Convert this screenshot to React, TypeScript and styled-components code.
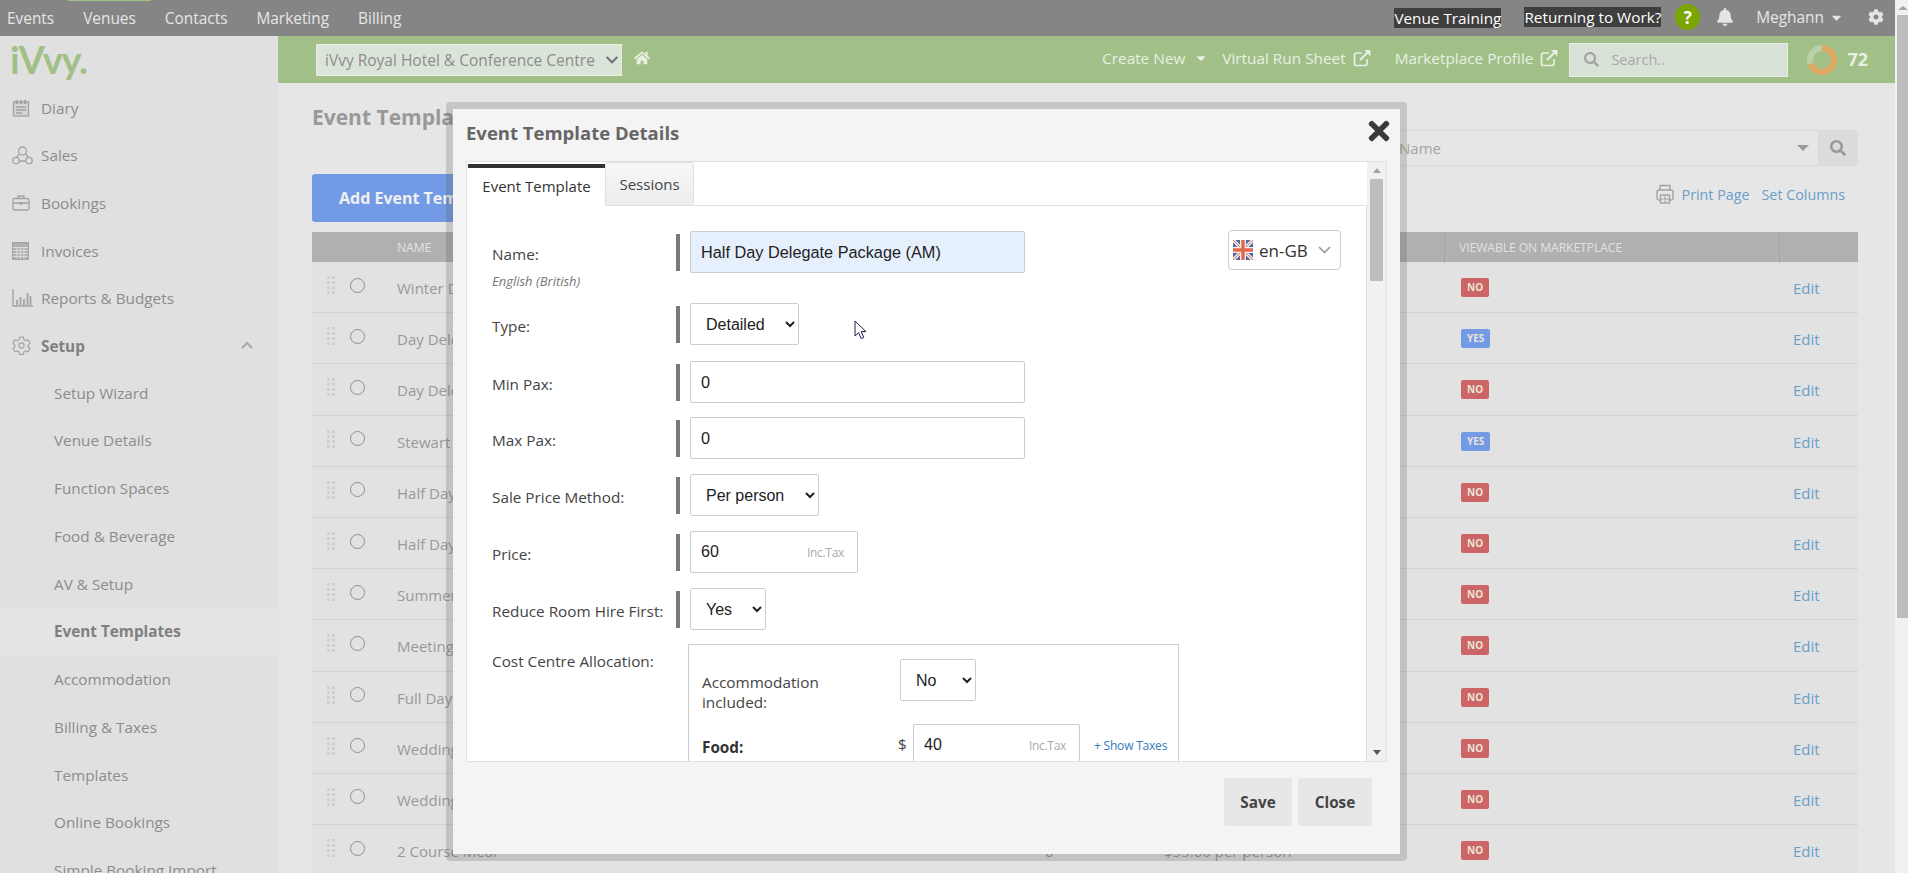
import React from 'react';
import styled, { createGlobalStyle } from 'styled-components';
import { FaTimes, FaHome, FaBell, FaCog, FaSearch, FaCaretDown, FaChevronDown } from 'react-icons/fa';

const UI = `"Open Sans", "Liberation Sans", Arial, sans-serif`;
const NATIVE = `"Liberation Sans", Arial, sans-serif`;

const Global = createGlobalStyle`
  html, body { margin: 0; padding: 0; width: 100%; height: 100%; overflow: hidden; background: #e6e6e6; }
  * { box-sizing: border-box; }
  body { font-family: ${UI}; font-size: 14px; }
`;

const Root = styled.div`
  position: relative;
  width: 1908px;
  height: 873px;
  display: flex;
  overflow: hidden;
`;
const Page = styled.div`
  width: 1895px;
  height: 873px;
  display: flex;
  flex-direction: column;
`;
const PageScroll = styled.div`
  width: 13px;
  height: 873px;
  background: #f1f1f1;
  padding-left: 2px;
  display: flex;
  flex-direction: column;
`;
const PageArrow = styled.div`
  height: 15px;
  display: flex;
  align-items: center;
  justify-content: center;
  &::after {
    content: '';
    border-left: 5px solid transparent;
    border-right: 5px solid transparent;
    border-bottom: 4px solid #a3a3a3;
  }
`;
const PageThumb = styled.div`
  height: 603px;
  background: #bdbdbd;
`;

/* top navigation */
const TopBar = styled.header`
  height: 36px;
  background: #858585;
  display: flex;
  align-items: center;
  justify-content: space-between;
  padding: 0 11px 0 7px;
  flex: none;
`;
const TopNav = styled.nav`
  display: flex;
  gap: 29px;
  height: 36px;
`;
const TopLink = styled.a<{ $active?: boolean }>`
  color: #e6e6e6;
  font-size: 15.4px;
  line-height: 37px;
  height: 36px;
  position: relative;
  &::before {
    content: '';
    display: ${(p) => (p.$active ? 'block' : 'none')};
    position: absolute;
    top: 0;
    left: -15px;
    right: -15px;
    height: 1px;
    background: #a1c088;
  }
`;
const TopRight = styled.div`
  display: flex;
  align-items: center;
`;
const TrainingChip = styled.span<{ $gap: number; $up?: boolean }>`
  background: #3e3e3e;
  color: #fff;
  font-size: 15.3px;
  line-height: 20px;
  height: 20px;
  white-space: nowrap;
  margin-right: ${(p) => p.$gap}px;
  margin-top: ${(p) => (p.$up ? '-2px' : '0')};
`;
const HelpBadge = styled.span`
  width: 25px;
  height: 26px;
  border-radius: 50%;
  background: #7ba600;
  color: #fff;
  font-weight: 700;
  font-size: 17px;
  display: flex;
  align-items: center;
  justify-content: center;
  margin: -2px 16px 0 0;
`;
const UserName = styled.span`
  color: #e6e6e6;
  font-size: 15.4px;
  margin: -2px 5px 0 22px;
`;
const TopIcon = styled.span<{ $color?: string; $left?: number }>`
  display: flex;
  color: ${(p) => p.$color ?? '#e4e4e4'};
  margin-left: ${(p) => p.$left ?? 0}px;
  margin-top: -2px;
`;

/* shell */
const Shell = styled.div`
  flex: 1;
  display: flex;
  min-height: 0;
`;
const Sidebar = styled.aside`
  width: 278px;
  background: #e0e0e0;
  flex: none;
  overflow: hidden;
  position: relative;
`;
const Logo = styled.div`
  font-family: "Lato", sans-serif;
  color: #a1c088;
  font-size: 38px;
  font-weight: 700;
  letter-spacing: -1.2px;
  height: 48px;
  line-height: 46px;
  padding-left: 10px;
`;
const MainItem = styled.div`
  height: 47.6px;
  display: flex;
  align-items: center;
  color: #8c8c8c;
  font-size: 15.3px;
  padding-left: 12px;
  position: relative;
`;
const SetupItem = styled(MainItem)`
  font-weight: 700;
  color: #7f7f7f;
`;
const ItemIcon = styled.span`
  width: 29px;
  display: flex;
  flex: none;
`;
const CollapseMark = styled.svg`
  position: absolute;
  left: 241px;
  top: 19px;
`;
const SubItem = styled.div<{ $active?: boolean }>`
  height: 47.75px;
  line-height: 47.75px;
  padding-left: 54px;
  color: ${(p) => (p.$active ? '#7f7f7f' : '#8c8c8c')};
  font-size: 15.3px;
  font-weight: ${(p) => (p.$active ? 700 : 400)};
  background: ${(p) => (p.$active ? '#e3e4e3' : 'transparent')};
  white-space: nowrap;
`;
const Column = styled.div`
  flex: 1;
  min-width: 0;
  display: flex;
  flex-direction: column;
`;
const GreenBar = styled.div`
  height: 47px;
  flex: none;
  background: #a1c088;
  display: flex;
  align-items: center;
  padding-left: 38px;
`;
const VenueSelect = styled.div`
  width: 306px;
  height: 32px;
  background: #dbe4d8;
  border: 1px solid #e8eee4;
  display: flex;
  align-items: center;
  justify-content: space-between;
  padding: 0 2px 0 8px;
  color: #8d8d8d;
  font-size: 15.5px;
  white-space: nowrap;
`;
const HomeLink = styled.span`
  display: flex;
  color: #e6eee0;
  margin: -4px auto 0 12px;
`;
const BarLink = styled.span<{ $left?: number }>`
  display: flex;
  align-items: center;
  color: #e8efe3;
  font-size: 15.35px;
  white-space: nowrap;
  margin: -4px 0 0 ${(p) => p.$left ?? 0}px;
`;
const BarIcon = styled.span<{ $gap: number }>`
  display: flex;
  margin-left: ${(p) => p.$gap}px;
`;
const BarSearch = styled.div`
  width: 219px;
  height: 34px;
  background: #d9e2d7;
  border: 1px solid #e8eee4;
  display: flex;
  align-items: center;
  padding-left: 14px;
  color: #a8a8a8;
  font-size: 14.5px;
  margin-left: 11px;
  gap: 12px;
`;
const DonutSlot = styled.span`
  display: flex;
  margin-left: 19px;
`;
const Score = styled.span`
  font-size: 18px;
  font-weight: 700;
  color: #e8efe3;
  margin: -2px 27px 0 10px;
`;

/* main content */
const Content = styled.main`
  flex: 1;
  min-height: 0;
  background: #e6e6e6;
  padding: 0 37px 0 34px;
  overflow: hidden;
`;
const HeadRow = styled.div`
  display: flex;
  justify-content: space-between;
  align-items: flex-start;
  height: 83px;
`;
const Heading = styled.h1`
  margin: 21px 0 0;
  font-size: 21px;
  line-height: 26px;
  font-weight: 700;
  color: #999;
`;
const Filter = styled.div`
  margin-top: 47px;
  display: flex;
  width: 518px;
  height: 36px;
`;
const FilterInput = styled.div`
  flex: 1;
  border-top: 1px solid #dcdcdc;
  border-bottom: 1px solid #dcdcdc;
  color: #a5a5a5;
  font-size: 15px;
  line-height: 34px;
  padding: 0 9px 0 59px;
  display: flex;
  justify-content: space-between;
  align-items: center;
`;
const FilterCaret = styled.span`
  border-left: 6px solid transparent;
  border-right: 6px solid transparent;
  border-top: 6px solid #9a9a9a;
`;
const FilterButton = styled.span`
  width: 40px;
  background: #dcdcda;
  color: #999;
  display: flex;
  align-items: center;
  justify-content: center;
  border-radius: 0 3px 3px 0;
`;
const Toolbar = styled.div`
  margin-top: 8px;
  height: 48px;
  display: flex;
  align-items: center;
  justify-content: space-between;
`;
const AddButton = styled.button`
  height: 48px;
  width: 240px;
  border: 0;
  border-radius: 3px;
  background: #739be5;
  color: #f0f0f0;
  font-family: ${UI};
  font-size: 16px;
  font-weight: 700;
  text-align: left;
  padding-left: 27px;
`;
const ToolLinks = styled.div`
  display: flex;
  align-items: center;
  padding-right: 13px;
  color: #6a9fc9;
  font-size: 14.3px;
  margin-top: -8px;
`;
const PrintLink = styled.span`
  margin: 0 12px 0 8px;
`;
const Table = styled.div`
  margin-top: 10px;
`;
const HeadGrid = styled.div`
  display: grid;
  grid-template-columns: 85px 1047px 335px 1fr 0;
  height: 30px;
  background: #b0b0b0;
  color: #e2e2e2;
  font-size: 12.2px;
  line-height: 31px;
  letter-spacing: -0.1px;
`;
const HeadCell = styled.span<{ $rule?: boolean }>`
  padding-left: ${(p) => (p.$rule ? '14px' : '0')};
  border-left: ${(p) => (p.$rule ? '1px solid #a5a5a5' : '0')};
`;
const RowGrid = styled.div`
  display: grid;
  grid-template-columns: 38px 47px 648px 119px 297px 332px 1fr;
  height: 51.2px;
  padding-top: 2px;
  align-items: center;
  border-bottom: 1px solid #d2d2d2;
  background: #e2e2e2;
  color: #999;
  font-size: 15px;
  white-space: nowrap;
`;
const DragCell = styled.span`
  display: flex;
  padding: 0 0 6px 15px;
`;
const Radio = styled.span`
  width: 15px;
  height: 15px;
  border: 1px solid #8e8e8e;
  border-radius: 50%;
  margin-top: -6px;
`;
const Badge = styled.span<{ $yes: boolean }>`
  display: inline-block;
  height: 19px;
  line-height: 19px;
  padding: 0 6px;
  border-radius: 2px;
  background: ${(p) => (p.$yes ? '#739be5' : '#cc6666')};
  color: #ece4d8;
  font-size: 10px;
  font-weight: 700;
  vertical-align: top;
  margin-top: 0;
`;
const EditLink = styled.span`
  color: #6a9fc9;
  font-size: 15px;
`;

/* modal */
const Overlay = styled.div`
  position: absolute;
  inset: 0;
`;
const Modal = styled.section`
  position: absolute;
  left: 446px;
  top: 102px;
  width: 961px;
  height: 759px;
  border: 7px solid rgba(70, 70, 60, 0.2);
  border-radius: 4px;
  background: #f4f4f4;
  background-clip: padding-box;
  display: flex;
  flex-direction: column;
  padding: 0 13px;
`;
const ModalHead = styled.div`
  height: 52px;
  flex: none;
  display: flex;
  align-items: center;
  justify-content: space-between;
`;
const ModalTitle = styled.h2`
  margin: 0;
  font-size: 18.5px;
  font-weight: 700;
  color: #666;
  padding-bottom: 6px;
`;
const CloseX = styled.span`
  display: flex;
  color: #3a3a3a;
  margin: -8px -7px 0 0;
`;
const Pane = styled.div`
  height: 601px;
  flex: none;
  width: 921px;
  background: #fff;
  border: 1px solid #e0e0e0;
  display: flex;
  overflow: hidden;
`;
const PaneBody = styled.div`
  width: 900px;
  flex: none;
  display: flex;
  flex-direction: column;
`;
const Tabs = styled.div`
  display: flex;
  height: 44px;
  flex: none;
  padding-left: 1px;
`;
const TabActive = styled.div`
  width: 137px;
  margin-top: 2px;
  border-top: 4px solid #333;
  color: #333;
  font-size: 15px;
  line-height: 37px;
  text-align: center;
  background: #fff;
`;
const TabIdle = styled.div`
  width: 89px;
  height: 44px;
  border: 1px solid #e0e0e0;
  border-radius: 2px 2px 0 0;
  background: linear-gradient(#f7f7f7, #ececec);
  color: #444;
  font-size: 15px;
  line-height: 43px;
  text-align: center;
`;
const TabRest = styled.div`
  flex: 1;
  border-bottom: 1px solid #e0e0e0;
`;
const TabBody = styled.div`
  flex: 1;
  min-height: 0;
  position: relative;
  border-right: 1px solid #e0e0e0;
  padding: 25px 0 0 25px;
  overflow: hidden;
`;
const Row = styled.div<{ $height: number }>`
  display: grid;
  grid-template-columns: 184px 14px 1fr;
  height: ${(p) => p.$height}px;
  color: #444;
`;
const LabelBox = styled.div`
  padding-top: 13px;
  font-size: 15.3px;
  line-height: 20px;
  white-space: nowrap;
`;
const SubLabel = styled.div`
  font-size: 13px;
  font-style: italic;
  color: #777;
  line-height: 16px;
  margin-top: 9px;
`;
const MarkerBar = styled.span`
  width: 4px;
  height: 37px;
  margin-top: 3px;
  background: #7a7a7a;
`;
const TextInput = styled.input<{ $tint?: boolean }>`
  display: block;
  width: 335px;
  height: 42px;
  border: 1px solid #ccc;
  border-radius: 2px;
  padding: 0 10px;
  background: ${(p) => (p.$tint ? '#e6f0fc' : '#fff')};
  color: #222;
  font: 16.3px ${NATIVE};
  outline: none;
`;
const NativeSelect = styled.select<{ $width: number }>`
  display: block;
  width: ${(p) => p.$width}px;
  height: 42px;
  border: 1px solid #ccc;
  border-radius: 2px;
  padding: 0 4px 0 11px;
  background: #fff;
  color: #222;
  font: 16px ${NATIVE};
`;
const SuffixField = styled.div<{ $width: number }>`
  width: ${(p) => p.$width}px;
  height: 42px;
  border: 1px solid #ccc;
  border-radius: 2px;
  display: flex;
  align-items: center;
  padding: 0 13px 0 10px;
  justify-content: space-between;
  background: #fff;
`;
const SuffixValue = styled.span`
  font: 16px ${NATIVE};
  color: #222;
`;
const SuffixText = styled.span`
  font-size: 12px;
  color: #aaa;
  letter-spacing: -0.3px;
`;
const LangPicker = styled.div`
  position: absolute;
  left: 761px;
  top: 24px;
  width: 113px;
  height: 40px;
  border: 1px solid #ccc;
  border-radius: 4px;
  display: flex;
  align-items: center;
  padding-left: 4px;
  gap: 6px;
  color: #333;
  font-size: 17px;
`;
const LangChevron = styled.svg`
  margin-left: 4px;
`;
const CostRow = styled.div`
  display: grid;
  grid-template-columns: 196px 1fr;
  color: #444;
  font-size: 15.3px;
`;
const CostLabel = styled.div`
  padding-top: 7px;
  line-height: 20px;
`;
const CostBox = styled.div`
  width: 491px;
  height: 240px;
  border: 1px solid #ccc;
  padding: 14px 0 0 13px;
`;
const AccomRow = styled.div`
  display: flex;
  height: 65px;
`;
const AccomLabel = styled.div`
  width: 198px;
  line-height: 20px;
  padding-top: 13px;
`;
const FoodRow = styled.div`
  display: flex;
  align-items: flex-start;
`;
const FoodLabel = styled.div`
  width: 196px;
  font-weight: 700;
  color: #333;
  padding-top: 13px;
`;
const Dollar = styled.div`
  width: 15px;
  padding-top: 10px;
`;
const ShowTaxes = styled.a`
  color: #337ab7;
  font-size: 12px;
  letter-spacing: -0.2px;
  margin: 13px 0 0 14px;
  white-space: nowrap;
`;
const InnerScroll = styled.div`
  width: 19px;
  flex: 1;
  background: #f1f1f1;
  display: flex;
  flex-direction: column;
  align-items: center;
`;
const InnerArrow = styled.span<{ $down?: boolean }>`
  height: 17px;
  display: flex;
  align-items: center;
  &::after {
    content: '';
    border-left: 4px solid transparent;
    border-right: 4px solid transparent;
    ${(p) => (p.$down ? 'border-top: 5px solid #555;' : 'border-bottom: 5px solid #a3a3a3;')}
  }
`;
const InnerThumb = styled.span`
  width: 13px;
  height: 102px;
  background: #bdbdbd;
  margin-bottom: auto;
`;
const ModalFoot = styled.div`
  flex: 1;
  display: flex;
  justify-content: flex-end;
  align-items: flex-start;
  gap: 6px;
  padding: 16px 15px 0 0;
`;
const FootButton = styled.button<{ $width: number }>`
  width: ${(p) => p.$width}px;
  height: 48px;
  border: 0;
  border-radius: 2px;
  background: #e7e7e7;
  color: #444;
  font-family: ${UI};
  font-size: 15.3px;
  font-weight: 700;
`;
const Cursor = styled.svg`
  position: absolute;
  left: 854px;
  top: 320px;
`;

const stroke = { fill: 'none', stroke: '#a3a3a3', strokeWidth: 1.3 } as const;

const DiaryIcon = () => (
  <svg width="18" height="18" viewBox="0 0 18 18">
    <rect x="1.5" y="3" width="15" height="14" fill="#d4d4d4" stroke="#a3a3a3" strokeWidth="1.3" />
    <rect x="3.5" y="1" width="2.4" height="4" fill="#a3a3a3" />
    <rect x="12" y="1" width="2.4" height="4" fill="#a3a3a3" />
    <rect x="7.8" y="1" width="2.4" height="4" fill="#a3a3a3" />
    <path d="M4 8h10M4 11h10M4 14h6" {...stroke} />
  </svg>
);
const SalesIcon = () => (
  <svg width="21" height="19" viewBox="0 0 21 19">
    <circle cx="10.5" cy="5" r="4" {...stroke} />
    <circle cx="4" cy="14.5" r="3.2" {...stroke} />
    <circle cx="17" cy="14.5" r="3.2" {...stroke} />
    <path d="M7.5 8 4.6 11.3M13.5 8l2.9 3.3M7.2 15h6.6" {...stroke} />
  </svg>
);
const BookingsIcon = () => (
  <svg width="18" height="16" viewBox="0 0 18 16">
    <rect x="1" y="3.5" width="16" height="11.5" rx="1.5" {...stroke} />
    <path d="M6 3.5V1h6v2.5M1 8h16" {...stroke} />
    <rect x="7.5" y="7" width="3" height="2.6" fill="#a3a3a3" />
  </svg>
);
const InvoicesIcon = () => (
  <svg width="17" height="18" viewBox="0 0 17 18">
    <rect x="0.7" y="0.7" width="15.6" height="16.6" fill="#b2b2b2" stroke="#a3a3a3" strokeWidth="1.3" />
    <path d="M1 5.5h15M1 8.5h15M1 11.5h15M1 14.5h15M5 5.5V17M8.5 5.5V17M12 5.5V17" stroke="#e0e0e0" strokeWidth="0.9" />
  </svg>
);
const ReportsIcon = () => (
  <svg width="21" height="18" viewBox="0 0 21 18">
    <path d="M1 0v17h20" {...stroke} />
    <path d="M5 16v-5M8.5 16V8M12 16v-6M15.5 16V4M18.5 16V7" fill="none" stroke="#a3a3a3" strokeWidth="1.8" />
  </svg>
);
const GearIcon = () => (
  <svg width="19" height="19" viewBox="0 0 24 24" fill="none" stroke="#a3a3a3" strokeWidth="1.5" strokeLinejoin="round">
    <path d="M9.6 1.5h4.8l.7 3.2 2.2 1.2 3.1-1 2.4 4.2-2.4 2.1v2.4l2.4 2.1-2.4 4.2-3.1-1-2.2 1.2-.7 3.2H9.6l-.7-3.2-2.2-1.2-3.1 1-2.4-4.2 2.4-2.1v-2.4L1.2 9.1l2.4-4.2 3.1 1 2.2-1.2z" />
    <circle cx="12" cy="12" r="3.2" />
  </svg>
);
const Handle = () => (
  <svg width="8" height="18" viewBox="0 0 8 18" fill="#cfcfcf">
    {[0, 5].map((x) => [0, 5, 10, 15].map((y) => <rect key={`${x}-${y}`} x={x} y={y} width="3" height="3" />))}
  </svg>
);
const Printer = () => (
  <svg width="18" height="20" viewBox="0 0 18 20" fill="none" stroke="#a3a3a3" strokeWidth="1.4">
    <path d="M4 6V1.5h10V6" />
    <rect x="1" y="6" width="16" height="10" rx="2" />
    <rect x="4.5" y="11" width="9" height="8" fill="#e6e6e6" />
    <path d="M4.5 15h9M9 11v8" strokeWidth="0.9" />
  </svg>
);
const Donut = () => (
  <svg width="30" height="30" viewBox="0 0 30 30" fill="none" strokeWidth="6">
    <circle cx="15" cy="15" r="12" stroke="#b9cfa4" />
    <path d="M15 3A12 12 0 1 1 3.6 18.7" stroke="#dfa862" />
  </svg>
);
const Flag = () => (
  <svg width="20" height="20" viewBox="0 0 20 20">
    <rect width="20" height="20" fill="#4a66a8" />
    <path d="M0 0l20 20M20 0L0 20" stroke="#f2e9e6" strokeWidth="3.4" />
    <path d="M0 0l20 20M20 0L0 20" stroke="#d9776a" strokeWidth="1" />
    <path d="M10 0v20M0 10h20" stroke="#f5f0ec" strokeWidth="6" />
    <path d="M10 0v20M0 10h20" stroke="#e2674d" strokeWidth="3.4" />
  </svg>
);
const ExternalBox = () => (
  <svg width="18" height="18" viewBox="0 0 18 18" fill="none" stroke="#e8efe3">
    <path d="M14 10v4.5a2 2 0 0 1-2 2H3.5a2 2 0 0 1-2-2V6a2 2 0 0 1 2-2H9" strokeWidth="1.7" />
    <path d="M7 11 15 3" strokeWidth="2.2" />
    <path d="M11 1h6.5v6.5z" fill="#e8efe3" stroke="none" />
  </svg>
);

const rows: [string, boolean][] = [
  ['Winter Day Delegate Package', false],
  ['Day Delegate Package', true],
  ['Day Delegate Package (Basic)', false],
  ['Stewart Day Delegate Package', true],
  ['Half Day Delegate Package (PM)', false],
  ['Half Day Delegate Package (AM)', false],
  ['Summer Day Delegate Package', false],
  ['Meeting Room Package', false],
  ['Full Day Delegate Package', false],
  ['Wedding Package', false],
  ['Wedding Package Deluxe', false],
  ['2 Course Meal', false],
];
const subItems = ['Setup Wizard', 'Venue Details', 'Function Spaces', 'Food & Beverage', 'AV & Setup', 'Event Templates', 'Accommodation', 'Billing & Taxes', 'Templates', 'Online Bookings', 'Simple Booking Import'];

export default function App() {
  return (
    <Root>
      <Global />
      <Page>
        <TopBar>
          <TopNav>
            <TopLink>Events</TopLink>
            <TopLink $active>Venues</TopLink>
            <TopLink>Contacts</TopLink>
            <TopLink>Marketing</TopLink>
            <TopLink>Billing</TopLink>
          </TopNav>
          <TopRight>
            <TrainingChip $gap={23}>Venue Training</TrainingChip>
            <TrainingChip $gap={14} $up>Returning to Work?</TrainingChip>
            <HelpBadge>?</HelpBadge>
            <TopIcon><FaBell size={18} /></TopIcon>
            <UserName>Meghann</UserName>
            <TopIcon><FaCaretDown size={15} /></TopIcon>
            <TopIcon $left={24}><FaCog size={16} /></TopIcon>
          </TopRight>
        </TopBar>
        <Shell>
          <Sidebar>
            <Logo>iVvy.</Logo>
            <MainItem><ItemIcon><DiaryIcon /></ItemIcon>Diary</MainItem>
            <MainItem><ItemIcon><SalesIcon /></ItemIcon>Sales</MainItem>
            <MainItem><ItemIcon><BookingsIcon /></ItemIcon>Bookings</MainItem>
            <MainItem><ItemIcon><InvoicesIcon /></ItemIcon>Invoices</MainItem>
            <MainItem><ItemIcon><ReportsIcon /></ItemIcon>Reports &amp; Budgets</MainItem>
            <SetupItem>
              <ItemIcon><GearIcon /></ItemIcon>Setup
              <CollapseMark width="12" height="8" viewBox="0 0 12 8" fill="none" stroke="#a8a8a8" strokeWidth="2"><path d="M1 7l5-5 5 5" /></CollapseMark>
            </SetupItem>
            {subItems.map((s) => (
              <SubItem key={s} $active={s === 'Event Templates'}>{s}</SubItem>
            ))}
          </Sidebar>
          <Column>
            <GreenBar>
              <VenueSelect>
                iVvy Royal Hotel &amp; Conference Centre
                <FaChevronDown size={14} color="#777" />
              </VenueSelect>
              <HomeLink><FaHome size={16} /></HomeLink>
              <BarLink>Create New<BarIcon $gap={9}><FaCaretDown size={14} /></BarIcon></BarLink>
              <BarLink $left={14}>Virtual Run Sheet<BarIcon $gap={7}><ExternalBox /></BarIcon></BarLink>
              <BarLink $left={24}>Marketplace Profile<BarIcon $gap={7}><ExternalBox /></BarIcon></BarLink>
              <BarSearch><FaSearch size={15} color="#a5a5a5" />Search..</BarSearch>
              <DonutSlot><Donut /></DonutSlot>
              <Score>72</Score>
            </GreenBar>
            <Content>
              <HeadRow>
                <Heading>Event Templates</Heading>
                <Filter>
                  <FilterInput>Name<FilterCaret /></FilterInput>
                  <FilterButton><FaSearch size={16} /></FilterButton>
                </Filter>
              </HeadRow>
              <Toolbar>
                <AddButton>Add Event Template</AddButton>
                <ToolLinks>
                  <Printer />
                  <PrintLink>Print Page</PrintLink>
                  <span>Set Columns</span>
                </ToolLinks>
              </Toolbar>
              <Table>
                <HeadGrid>
                  <span />
                  <HeadCell>NAME</HeadCell>
                  <HeadCell $rule>VIEWABLE ON MARKETPLACE</HeadCell>
                  <HeadCell $rule />
                </HeadGrid>
                {rows.map(([name, yes], i) => (
                  <RowGrid key={i}>
                    <DragCell><Handle /></DragCell>
                    <Radio />
                    <span>{name}</span>
                    <span>0</span>
                    <span>$55.00 per person</span>
                    <span><Badge $yes={yes}>{yes ? 'YES' : 'NO'}</Badge></span>
                    <EditLink>Edit</EditLink>
                  </RowGrid>
                ))}
              </Table>
            </Content>
          </Column>
        </Shell>
      </Page>
      <PageScroll>
        <PageArrow />
        <PageThumb />
      </PageScroll>
      <Overlay>
        <Modal>
          <ModalHead>
            <ModalTitle>Event Template Details</ModalTitle>
            <CloseX><FaTimes size={30} /></CloseX>
          </ModalHead>
          <Pane>
            <PaneBody>
              <Tabs>
                <TabActive>Event Template</TabActive>
                <TabIdle>Sessions</TabIdle>
                <TabRest />
              </Tabs>
              <TabBody>
                <LangPicker>
                  <Flag />en-GB
                  <LangChevron width="13" height="8" viewBox="0 0 13 8" fill="none" stroke="#9a9a9a" strokeWidth="1.6"><path d="M1 1l5.5 5.5L12 1" /></LangChevron>
                </LangPicker>
                <Row $height={72}>
                  <LabelBox>Name:<SubLabel>English (British)</SubLabel></LabelBox>
                  <MarkerBar />
                  <TextInput $tint readOnly value="Half Day Delegate Package (AM)" />
                </Row>
                <Row $height={58}>
                  <LabelBox>Type:</LabelBox>
                  <MarkerBar />
                  <NativeSelect $width={109} defaultValue="Detailed"><option>Detailed</option></NativeSelect>
                </Row>
                <Row $height={56}>
                  <LabelBox>Min Pax:</LabelBox>
                  <MarkerBar />
                  <TextInput readOnly value="0" />
                </Row>
                <Row $height={57}>
                  <LabelBox>Max Pax:</LabelBox>
                  <MarkerBar />
                  <TextInput readOnly value="0" />
                </Row>
                <Row $height={57}>
                  <LabelBox>Sale Price Method:</LabelBox>
                  <MarkerBar />
                  <NativeSelect $width={129} defaultValue="Per person"><option>Per person</option></NativeSelect>
                </Row>
                <Row $height={57}>
                  <LabelBox>Price:</LabelBox>
                  <MarkerBar />
                  <SuffixField $width={168}><SuffixValue>60</SuffixValue><SuffixText>Inc.Tax</SuffixText></SuffixField>
                </Row>
                <Row $height={56}>
                  <LabelBox>Reduce Room Hire First:</LabelBox>
                  <MarkerBar />
                  <NativeSelect $width={76} defaultValue="Yes"><option>Yes</option></NativeSelect>
                </Row>
                <CostRow>
                  <CostLabel>Cost Centre Allocation:</CostLabel>
                  <CostBox>
                    <AccomRow>
                      <AccomLabel>Accommodation<br />included:</AccomLabel>
                      <NativeSelect $width={76} defaultValue="No"><option>No</option></NativeSelect>
                    </AccomRow>
                    <FoodRow>
                      <FoodLabel>Food:</FoodLabel>
                      <Dollar>$</Dollar>
                      <SuffixField $width={167}><SuffixValue>40</SuffixValue><SuffixText>Inc.Tax</SuffixText></SuffixField>
                      <ShowTaxes>+ Show Taxes</ShowTaxes>
                    </FoodRow>
                  </CostBox>
                </CostRow>
              </TabBody>
            </PaneBody>
            <InnerScroll>
              <InnerArrow />
              <InnerThumb />
              <InnerArrow $down />
            </InnerScroll>
          </Pane>
          <ModalFoot>
            <FootButton $width={68}>Save</FootButton>
            <FootButton $width={74}>Close</FootButton>
          </ModalFoot>
        </Modal>
        <Cursor width="13" height="20" viewBox="0 0 13 20">
          <path d="M1 1v15l3.6-3.4 2.6 6 2.6-1.1-2.6-5.9H12z" fill="#fff" stroke="#1d1d4f" strokeWidth="1" />
        </Cursor>
      </Overlay>
    </Root>
  );
}
